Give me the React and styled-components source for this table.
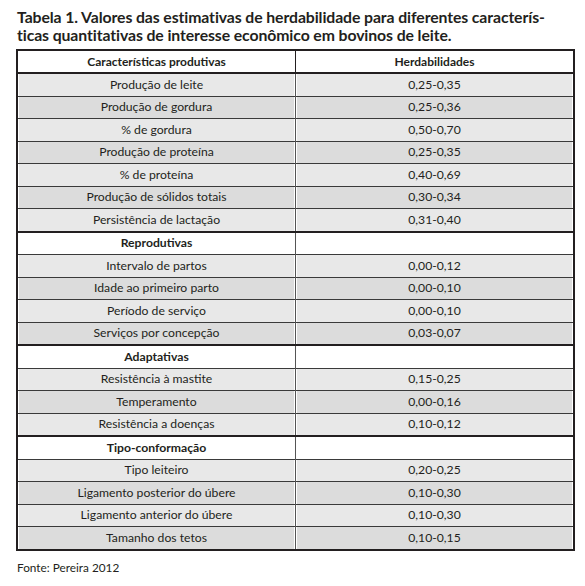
import React from "react";
import styled, { createGlobalStyle } from "styled-components";

const GlobalStyle = createGlobalStyle`
  body {
    margin: 0;
    background: #ffffff;
    font-family: "Lato", "Open Sans", sans-serif;
    color: #231f20;
  }
`;

const Page = styled.div`
  width: 585px;
  height: 586px;
  box-sizing: border-box;
  padding: 8px 10px 0 16px;
`;

const Title = styled.h1`
  margin: 0 0 5px 1px;
  font-size: 15.8px;
  line-height: 18px;
  font-weight: 700;
  letter-spacing: -0.1px;
  color: #231f20;
`;

const Table = styled.table`
  width: 559px;
  border-collapse: collapse;
  table-layout: fixed;
  border: 2px solid #231f20;
  font-size: 12.2px;
  line-height: 14px;
`;

const HeadCell = styled.th`
  height: 21px;
  padding: 0;
  font-size: 12px;
  font-weight: 700;
  text-align: center;
  background: #ffffff;
  border-bottom: 2px solid #231f20;
  border-left: 1px solid #231f20;
`;

const Row = styled.tr`
  background: ${(p) => (p.$section ? "#ffffff" : p.$alt ? "#dcdcdc" : "#e8e8e8")};
`;

const Cell = styled.td`
  height: 21.5px;
  padding: 0;
  text-align: center;
  font-weight: ${(p) => (p.$bold ? 700 : 400)};
  border-top: ${(p) => (p.$section ? "2px solid #231f20" : "1px solid #3a3a3a")};
  border-left: 1px solid #555;
  box-shadow: inset 1px 0 0 #ffffff, inset -1px 0 0 #ffffff;
`;

const Source = styled.p`
  margin: 9px 0 0 1px;
  font-size: 11.8px;
`;

const rows = [
  ["Produção de leite", "0,25-0,35"],
  ["Produção de gordura", "0,25-0,36"],
  ["% de gordura", "0,50-0,70"],
  ["Produção de proteína", "0,25-0,35"],
  ["% de proteína", "0,40-0,69"],
  ["Produção de sólidos totais", "0,30-0,34"],
  ["Persistência de lactação", "0,31-0,40"],
  ["Reprodutivas", null],
  ["Intervalo de partos", "0,00-0,12"],
  ["Idade ao primeiro parto", "0,00-0,10"],
  ["Período de serviço", "0,00-0,10"],
  ["Serviços por concepção", "0,03-0,07"],
  ["Adaptativas", null],
  ["Resistência à mastite", "0,15-0,25"],
  ["Temperamento", "0,00-0,16"],
  ["Resistência a doenças", "0,10-0,12"],
  ["Tipo-conformação", null],
  ["Tipo leiteiro", "0,20-0,25"],
  ["Ligamento posterior do úbere", "0,10-0,30"],
  ["Ligamento anterior do úbere", "0,10-0,30"],
  ["Tamanho dos tetos", "0,10-0,15"],
];

const App = () => {
  let n = 0;
  return (
    <>
      <GlobalStyle />
      <Page>
        <Title>
          Tabela 1. Valores das estimativas de herdabilidade para diferentes caracterís-
          <br />
          ticas quantitativas de interesse econômico em bovinos de leite.
        </Title>
        <Table>
          <thead>
            <tr>
              <HeadCell>Características produtivas</HeadCell>
              <HeadCell>Herdabilidades</HeadCell>
            </tr>
          </thead>
          <tbody>
            {rows.map(([label, value]) => {
              const section = value === null;
              const alt = section ? false : n++ % 2 === 1;
              if (section) n = 0;
              return (
                <Row key={label} $section={section} $alt={alt}>
                  <Cell $section={section} $bold={section}>
                    {label}
                  </Cell>
                  <Cell $section={section}>{value}</Cell>
                </Row>
              );
            })}
          </tbody>
        </Table>
        <Source>Fonte: Pereira 2012</Source>
      </Page>
    </>
  );
};

export default App;
